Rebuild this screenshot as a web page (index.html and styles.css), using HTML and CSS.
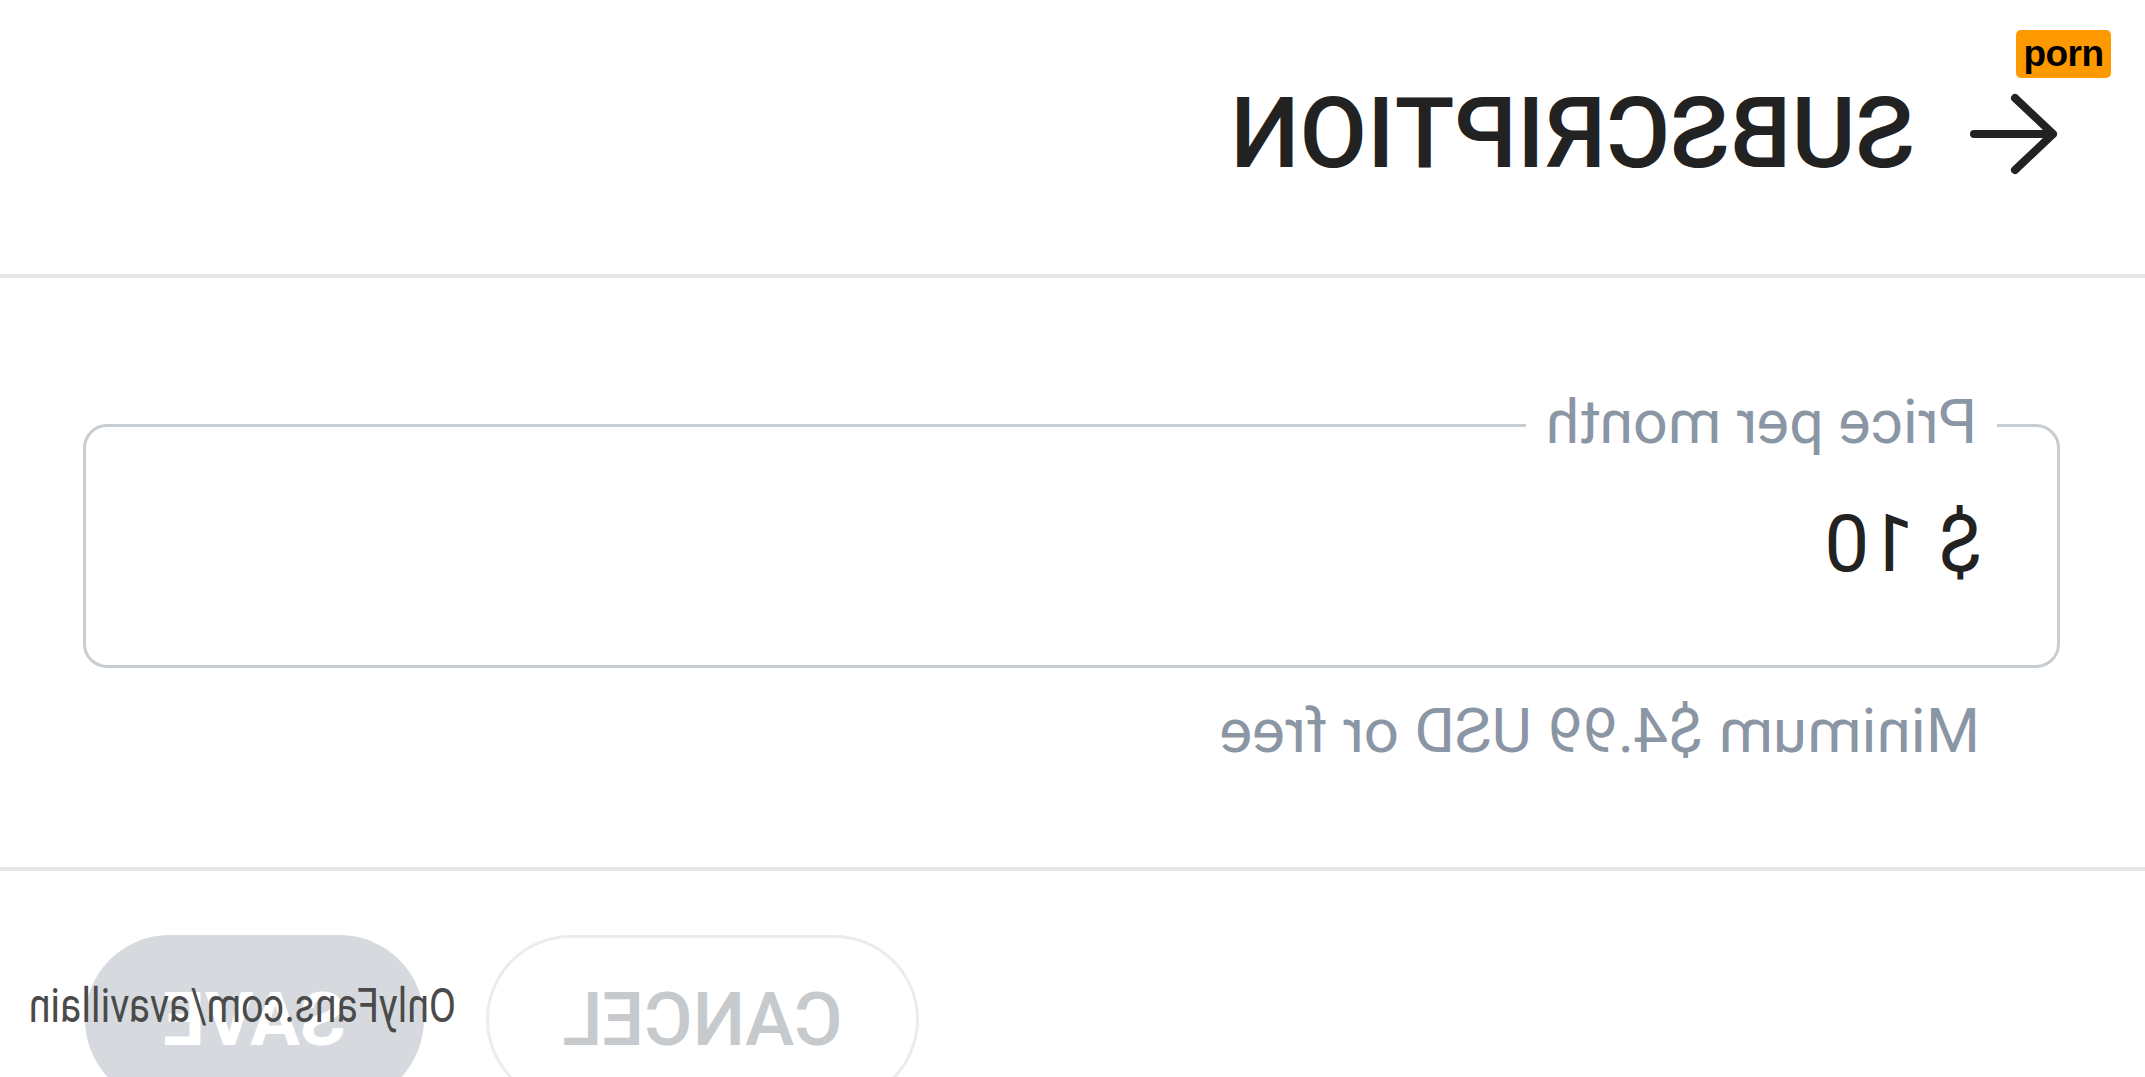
FILE: index.html
```html
<!DOCTYPE html>
<html lang="en">
<head>
<meta charset="utf-8">
<title>Subscription</title>
<link rel="stylesheet" href="styles.css">
</head>
<body>
<div class="page">
  <header class="head">
    <svg class="back" width="90" height="82" viewBox="0 0 90 82" aria-hidden="true">
      <path d="M85 41 H6 M44 5 L6 41 L44 77" fill="none" stroke="#222" stroke-width="8" stroke-linecap="round" stroke-linejoin="round"/>
    </svg>
    <h1 class="title">SUBSCRIPTION</h1>
  </header>
  <div class="divider"></div>
  <section class="form">
    <div class="field">
      <span class="label">Price per month</span>
      <div class="value">$ 10</div>
    </div>
    <p class="hint">Minimum $4.99 USD or free</p>
  </section>
  <div class="divider"></div>
  <div class="actions">
    <button class="btn btn-cancel">CANCEL</button>
    <button class="btn btn-save">SAVE</button>
  </div>
  <div class="watermark">OnlyFans.com/avavillain</div>
</div>
<div class="badge">porn</div>
</body>
</html>
```
FILE: styles.css
```css
html, body {
  margin: 0;
  padding: 0;
  background: #fff;
  overflow: hidden;
}
body {
  width: 2145px;
  height: 1077px;
  position: relative;
  font-family: Roboto, "Noto Sans", "Liberation Sans", sans-serif;
}
.page {
  width: 2145px;
  height: 1077px;
  overflow: hidden;
  transform: scaleX(-1);
  position: relative;
}
.head {
  height: 274px;
  display: flex;
  align-items: center;
  padding: 0 0 6px 86px;
  gap: 54px;
  box-sizing: border-box;
}
.back {
  display: block;
  flex: none;
}
.title {
  margin: 0;
  font-size: 98px;
  font-weight: 500;
  line-height: 1;
  color: #222;
}
.divider {
  height: 4px;
  background: #e4e6e8;
}
.form {
  height: 589px;
  padding: 146px 83px 0 85px;
  box-sizing: border-box;
}
.field {
  position: relative;
  height: 244px;
  border: 3px solid #c8cdd1;
  border-radius: 24px;
  box-sizing: border-box;
  display: flex;
  align-items: center;
  padding: 0 74px 4px;
}
.label {
  position: absolute;
  left: 60px;
  top: -40px;
  padding: 0 20px;
  background: #fff;
  font-size: 61px;
  line-height: 70px;
  color: #8a96a3;
}
.value {
  font-size: 80px;
  line-height: 1;
  color: #222;
  word-spacing: 4px;
}
.hint {
  margin: 26px 0 0 80px;
  font-size: 62px;
  line-height: 1.2;
  color: #8a96a3;
}
.actions {
  display: flex;
  justify-content: flex-end;
  gap: 62px;
  padding: 64px 85px 0 0;
}
.btn {
  height: 169px;
  border-radius: 85px;
  font-family: Roboto, "Noto Sans", sans-serif;
  font-size: 74px;
  font-weight: 500;
  box-sizing: border-box;
  padding: 0;
}
.btn-cancel {
  width: 433px;
  background: #fff;
  border: 3px solid #ececee;
  color: #c6cacd;
}
.btn-save {
  width: 339px;
  background: #d6dade;
  border: none;
  color: #fff;
  font-weight: 700;
}
.watermark {
  position: absolute;
  left: 1689px;
  top: 982px;
  font-family: Roboto, sans-serif;
  font-size: 48px;
  line-height: 1;
  color: #4a4a4a;
  white-space: nowrap;
  transform: scaleX(0.82);
  transform-origin: left center;
}
.badge {
  position: absolute;
  top: 30px;
  right: 34px;
  width: 95px;
  height: 48px;
  background: #ff9900;
  border-radius: 5px;
  display: flex;
  align-items: center;
  justify-content: center;
  font-family: "Liberation Sans", Arial, sans-serif;
  font-weight: 700;
  font-size: 37px;
  color: #000;
  letter-spacing: -0.5px;
}
```
